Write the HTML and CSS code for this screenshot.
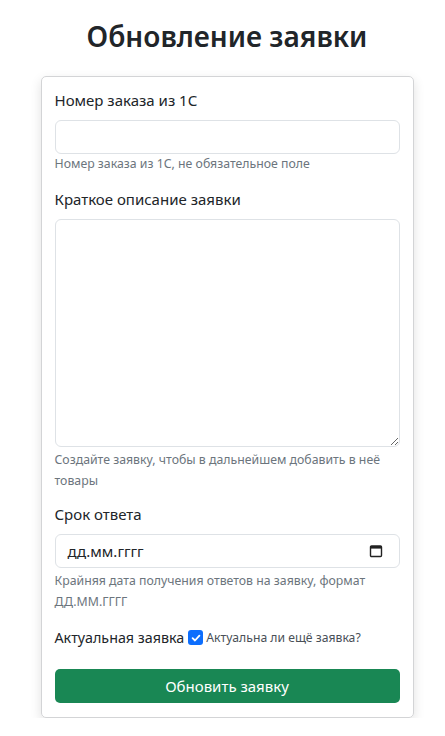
FILE: index.html
```html
<!DOCTYPE html>
<html lang="ru">
<head>
<meta charset="utf-8">
<title>Обновление заявки</title>
<link rel="stylesheet" href="styles.css">
</head>
<body>
<main class="page">
  <h1 class="title">Обновление заявки</h1>
  <form class="card">
    <div class="field">
      <label class="label">Номер заказа из 1С</label>
      <input class="control" type="text">
      <div class="help">Номер заказа из 1С, не обязательное поле</div>
    </div>
    <div class="field">
      <label class="label">Краткое описание заявки</label>
      <textarea class="control area"></textarea>
      <div class="help tall">Создайте заявку, чтобы в дальнейшем добавить в неё товары</div>
    </div>
    <div class="field">
      <label class="label">Срок ответа</label>
      <div class="control date">
        <span class="date-text">дд.мм.гггг</span>
        <svg class="cal" width="14" height="14" viewBox="0 0 14 14"><rect x="1.5" y="2" width="11" height="10.5" rx="1" fill="none" stroke="#222" stroke-width="1.4"/><rect x="1.5" y="2" width="11" height="2.6" fill="#222"/></svg>
      </div>
      <div class="help tall">Крайняя дата получения ответов на заявку, формат ДД.ММ.ГГГГ</div>
    </div>
    <div class="check-row">
      <span class="check-label">Актуальная заявка</span>
      <span class="box"><svg width="14" height="14" viewBox="0 0 14 14"><path d="M3.6 7.2 L6 9.5 L10.4 4.6" fill="none" stroke="#fff" stroke-width="1.8" stroke-linecap="round" stroke-linejoin="round"/></svg></span>
      <span class="check-help">Актуальна ли ещё заявка?</span>
    </div>
    <button type="button" class="btn">Обновить заявку</button>
  </form>
</main>
</body>
</html>
```
FILE: styles.css
```css
* { box-sizing: border-box; }
html, body { margin: 0; padding: 0; background: #fff; }
body {
  font-family: "Noto Sans", "Open Sans", sans-serif;
  color: #212529;
  font-size: 15px;
}
.page {
  display: flex;
  flex-direction: column;
  align-items: center;
  padding-top: 17px;
  padding-left: 9px;
}
.title {
  margin: 0 0 20px 0;
  font-size: 28px;
  font-weight: 600;
  line-height: 1.4;
  color: #212529;
  letter-spacing: 0;
}
.card {
  width: 373px;
  border: 1px solid #d3d4d6;
  border-radius: 5px;
  box-shadow: 0 4px 12px rgba(0,0,0,0.12);
  padding: 12px 13px 14px 13px;
  display: flex;
  flex-direction: column;
}
.field { display: flex; flex-direction: column; margin-bottom: 15px; }
.field:nth-of-type(2) { margin-bottom: 12px; }
.field:nth-of-type(3) { margin-bottom: 0; }
.label { font-size: 15px; line-height: 22px; margin-bottom: 9px; }
.control {
  width: 100%;
  height: 34px;
  border: 1px solid #dee2e6;
  border-radius: 6px;
  background: #fff;
  font: inherit;
  padding: 4px 12px;
  margin: 0;
  outline: none;
}
.area { height: 228px; resize: vertical; display: block; }
.date { display: flex; align-items: center; justify-content: space-between; }
.date-text { font-size: 15px; color: #212529; }
.cal { margin-right: 4px; }
.help { font-size: 12.3px; color: #6c757d; line-height: 18px; margin-top: 1px; }
.help.tall { line-height: 20.5px; margin-top: 3px; }
.check-row { display: flex; align-items: center; margin-top: 16px; margin-bottom: 22px; }
.check-label { font-size: 14.3px; }
.box {
  width: 15px; height: 15px;
  border-radius: 3px;
  background: #0d6efd;
  margin: 0 3px 0 4px;
  display: flex; align-items: center; justify-content: center;
}
.check-help { font-size: 12.2px; color: #495057; }
.btn {
  width: 100%;
  height: 34px;
  border: none;
  border-radius: 5px;
  background: #198754;
  color: #fff;
  font: inherit;
  font-size: 15px;
  cursor: pointer;
}
```
